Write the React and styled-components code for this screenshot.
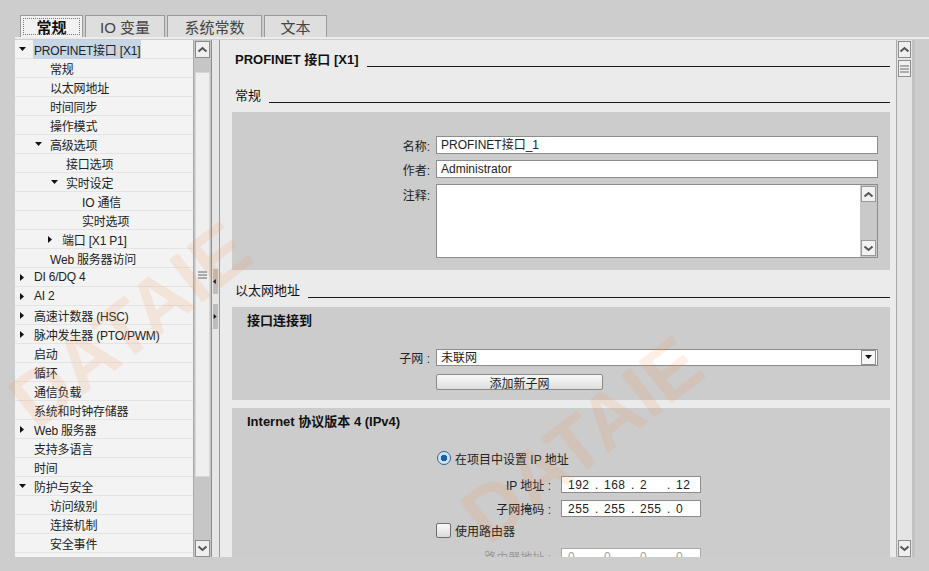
import React from "react";
import styled, { createGlobalStyle } from "styled-components";

const GlobalStyle = createGlobalStyle`
  body {
    margin: 0;
    font-family: "Liberation Sans", "Noto Sans CJK SC", sans-serif;
    font-size: 12px;
    color: #222;
  }
`;

const Root = styled.div`
  position: relative;
  width: 929px;
  height: 571px;
  overflow: hidden;
  background: #cdcdcd;
  padding-top: 15px;
  box-sizing: border-box;
`;

const TabBar = styled.div`
  display: flex;
  gap: 2px;
  height: 22px;
  margin-left: 15px;
  padding-left: 5px;
  border-bottom: 2px solid #ececec;
`;

const Tab = styled.div`
  width: ${({ w }) => w}px;
  height: 22px;
  box-sizing: border-box;
  display: flex;
  align-items: center;
  justify-content: center;
  border: 1px solid #9a9a9a;
  border-bottom: none;
  background: ${({ active }) => (active ? "#f2f2f2" : "#dedede")};
  font-size: 15px;
  font-weight: ${({ active }) => (active ? 700 : 400)};
  color: ${({ active }) => (active ? "#111" : "#444")};
  padding: 2px;
`;

const Focus = styled.span`
  flex: 1;
  align-self: stretch;
  display: flex;
  align-items: center;
  justify-content: center;
  border: 1px dotted #777;
`;

const Body = styled.div`
  display: flex;
  height: 517px;
  margin-left: 15px;
  margin-top: 1px;
`;

const Tree = styled.div`
  width: 178px;
  background: #f3f3f3;
  overflow: hidden;
`;

const TreeRow = styled.div`
  height: 19px;
  box-sizing: border-box;
  border-bottom: 1px solid #e4e4e4;
  display: flex;
  align-items: center;
  padding-left: ${({ level }) => 4 + level * 16}px;
  white-space: nowrap;
  letter-spacing: -0.2px;
`;

const Caret = styled.span`
  width: 14px;
  flex: none;
  display: flex;
  align-items: center;
`;

const TreeLabel = styled.span`
  padding: 1px 1px;
  background: ${({ selected }) => (selected ? "#c6d6e6" : "transparent")};
`;

const VScroll = styled.div`
  width: ${({ w }) => w}px;
  flex: none;
  display: flex;
  flex-direction: column;
  box-sizing: border-box;
  padding: 1px 1px 0;
  background: ${({ bg }) => bg};
  border-left: 1px solid #a8a8a8;
  border-right: ${({ edge }) => (edge ? "3px solid #c2c2c2" : "none")};
`;

const ScrollBtn = styled.div`
  height: 17px;
  flex: none;
  box-sizing: border-box;
  border: 1px solid #8c8c8c;
  background: #efefef;
  display: flex;
  align-items: center;
  justify-content: center;
  margin-top: ${({ mt }) => mt || 0}px;
`;

const Track = styled.div`
  flex: 1;
  display: flex;
  flex-direction: column;
  padding-top: ${({ offset }) => offset || 0}px;
`;

const Thumb = styled.div`
  height: ${({ h }) => h}px;
  background: #efefef;
  border: 1px solid #d6d6d6;
  box-sizing: border-box;
  display: flex;
  align-items: center;
  justify-content: center;
`;

const Splitter = styled.div`
  width: 9px;
  flex: none;
  box-sizing: border-box;
  background: #e6e6e6;
  border-left: 1px solid #8e8e8e;
  border-right: 1px solid #9a9a9a;
  display: flex;
  flex-direction: column;
  align-items: center;
  padding-top: 229px;
  gap: 10px;
`;

const SplitBtn = styled.div`
  width: 5px;
  height: 25px;
  background: #bdbdbd;
  display: flex;
  align-items: center;
  justify-content: center;
`;

const Pane = styled.div`
  width: 676px;
  flex: none;
  background: #ebebeb;
  overflow: hidden;
  box-sizing: border-box;
  padding: 12px 6px 0 12px;
`;

const Heading = styled.div`
  display: flex;
  align-items: flex-end;
  height: 16px;
  margin-top: ${({ mt }) => mt}px;
  padding-left: 3px;
  font-size: 13px;
  font-weight: ${({ big }) => (big ? 700 : 400)};
  color: #111;
  line-height: 16px;
`;

const Rule = styled.div`
  flex: 1;
  border-bottom: 1px solid #1c1c1c;
  margin: 0 0 1px 8px;
`;

const Box = styled.div`
  margin-top: 8px;
  background: #cccccc;
  padding: ${({ pt }) => pt}px 12px ${({ pb }) => pb}px 0;
  display: flex;
  flex-direction: column;
`;

const BoxTitle = styled.div`
  height: 16px;
  line-height: 16px;
  padding-left: 15px;
  font-size: 13px;
  font-weight: 700;
  color: #111;
`;

const Field = styled.div`
  display: grid;
  grid-template-columns: ${({ col }) => col || 198}px ${({ input }) => (input ? `${input}px` : "1fr")};
  column-gap: ${({ gap }) => gap || 6}px;
  align-items: ${({ top }) => (top ? "start" : "center")};
  margin-top: ${({ mt }) => mt || 0}px;
`;

const Label = styled.div`
  text-align: right;
  padding-top: ${({ top }) => (top ? 2 : 0)}px;
  color: ${({ dim }) => (dim ? "#9a9a9a" : "#222")};
`;

const Input = styled.div`
  height: ${({ h }) => h || 18}px;
  box-sizing: border-box;
  background: #fff;
  border: 1px solid ${({ dim }) => (dim ? "#a8a8a8" : "#8c8c8c")};
  display: flex;
  align-items: ${({ multi }) => (multi ? "stretch" : "center")};
  padding-left: ${({ pl }) => pl || 4}px;
  padding-right: ${({ pr }) => pr || 0}px;
  line-height: 14px;
  overflow: hidden;
  color: ${({ dim }) => (dim ? "#a0a0a0" : "#222")};
`;

const InnerScroll = styled.div`
  margin-left: auto;
  width: 17px;
  background: #c9c9c9;
  display: flex;
  flex-direction: column;
  justify-content: space-between;
  padding: 1px;
  box-sizing: border-box;
`;

const SmallBtn = styled.div`
  height: 16px;
  background: #f2f2f2;
  border: 1px solid #999;
  box-sizing: border-box;
  display: flex;
  align-items: center;
  justify-content: center;
`;

const DropBtn = styled.div`
  margin-left: auto;
  width: 15px;
  height: 15px;
  box-sizing: border-box;
  border: 1px solid #8c8c8c;
  background: #f6f6f6;
  display: flex;
  align-items: center;
  justify-content: center;
`;

const Button = styled.div`
  width: 167px;
  height: 16px;
  box-sizing: border-box;
  border: 1px solid #8a8a8a;
  border-radius: 2px;
  background: linear-gradient(#f8f8f8, #dedede);
  display: flex;
  align-items: center;
  justify-content: center;
  font-size: 12px;
`;

const OptionRow = styled.div`
  display: flex;
  align-items: center;
  gap: 4px;
  height: 16px;
  padding-left: ${({ pl }) => pl}px;
  margin-top: ${({ mt }) => mt}px;
  font-size: 12px;
`;

const Radio = styled.span`
  width: 14px;
  height: 14px;
  border-radius: 50%;
  box-sizing: border-box;
  border: 1px solid #2f5f8f;
  background: radial-gradient(circle, #1d5fa0 0 3px, #bfe0f5 3.5px, #e8f4fc 100%);
`;

const Check = styled.span`
  width: 15px;
  height: 15px;
  box-sizing: border-box;
  border: 1px solid #6e6e6e;
  border-radius: 2px;
  background: linear-gradient(#fbfbfb, #dadada);
`;

const Octet = styled.span`
  width: ${({ last }) => (last ? 20 : 27)}px;
  font-size: 12px;
  letter-spacing: 0.5px;
`;

const Dot = styled.span`
  width: 9px;
`;

const Watermark = styled.div`
  position: absolute;
  left: ${({ x }) => x}px;
  top: ${({ y }) => y}px;
  transform: translate(-50%, -50%) rotate(-38deg);
  font-family: "Liberation Sans", sans-serif;
  font-size: 78px;
  font-weight: 700;
  color: rgba(245, 140, 70, 0.14);
  pointer-events: none;
  white-space: nowrap;
`;

const Chevron = ({ down }) => (
  <svg width="11" height="7" viewBox="0 0 11 7">
    <polyline
      points={down ? "1.5,1.5 5.5,5 9.5,1.5" : "1.5,5.5 5.5,2 9.5,5.5"}
      fill="none"
      stroke="#555"
      strokeWidth="2"
    />
  </svg>
);

const Grip = () => (
  <svg width="9" height="8" viewBox="0 0 9 8">
    <path d="M0 1h9M0 4h9M0 7h9" stroke="#666" strokeWidth="1" />
  </svg>
);

const Tri = ({ dir }) => {
  const pts = {
    down: "0,1 7,1 3.5,5",
    right: "1,0 5,3.5 1,7",
    left: "4,0 0,3.5 4,7",
  }[dir];
  return (
    <svg width="7" height="7" viewBox="0 0 7 7">
      <polygon points={pts} fill="#111" />
    </svg>
  );
};

const tree = [
  { t: "PROFINET接口 [X1]", l: 0, c: "down", sel: true },
  { t: "常规", l: 1 },
  { t: "以太网地址", l: 1 },
  { t: "时间同步", l: 1 },
  { t: "操作模式", l: 1 },
  { t: "高级选项", l: 1, c: "down" },
  { t: "接口选项", l: 2 },
  { t: "实时设定", l: 2, c: "down" },
  { t: "IO 通信", l: 3 },
  { t: "实时选项", l: 3 },
  { t: "端口 [X1 P1]", l: 2, c: "right", back: true },
  { t: "Web 服务器访问", l: 1 },
  { t: "DI 6/DQ 4", l: 0, c: "right" },
  { t: "AI 2", l: 0, c: "right" },
  { t: "高速计数器 (HSC)", l: 0, c: "right" },
  { t: "脉冲发生器 (PTO/PWM)", l: 0, c: "right" },
  { t: "启动", l: 0 },
  { t: "循环", l: 0 },
  { t: "通信负载", l: 0 },
  { t: "系统和时钟存储器", l: 0 },
  { t: "Web 服务器", l: 0, c: "right" },
  { t: "支持多语言", l: 0 },
  { t: "时间", l: 0 },
  { t: "防护与安全", l: 0, c: "down" },
  { t: "访问级别", l: 1 },
  { t: "连接机制", l: 1 },
  { t: "安全事件", l: 1 },
];

const IpBox = ({ parts, dim }) => (
  <Input h={17} dim={dim} pl={6}>
    {parts.map((p, i) => (
      <React.Fragment key={i}>
        <Octet last={i === 3}>{p}</Octet>
        {i < 3 && <Dot>.</Dot>}
      </React.Fragment>
    ))}
  </Input>
);

export default function App() {
  return (
    <Root>
      <GlobalStyle />
      <TabBar>
        <Tab w={63} active>
          <Focus>常规</Focus>
        </Tab>
        <Tab w={80}>IO 变量</Tab>
        <Tab w={95}>系统常数</Tab>
        <Tab w={63}>文本</Tab>
      </TabBar>

      <Body>
        <Tree>
          {tree.map((r, i) => (
            <TreeRow key={i} level={r.back ? r.l - 0.25 : r.l}>
              <Caret>{r.c && <Tri dir={r.c} />}</Caret>
              <TreeLabel selected={r.sel}>{r.t}</TreeLabel>
            </TreeRow>
          ))}
        </Tree>

        <VScroll w={18} bg="#c6c6c6">
          <ScrollBtn>
            <Chevron />
          </ScrollBtn>
          <Track offset={14}>
            <Thumb h={405}>
              <Grip />
            </Thumb>
          </Track>
          <ScrollBtn>
            <Chevron down />
          </ScrollBtn>
        </VScroll>

        <Splitter>
          <SplitBtn>
            <Tri dir="left" />
          </SplitBtn>
          <SplitBtn>
            <Tri dir="right" />
          </SplitBtn>
        </Splitter>

        <Pane>
          <Heading big mt={0}>
            PROFINET 接口 [X1]
            <Rule />
          </Heading>
          <Heading mt={20}>
            常规
            <Rule />
          </Heading>
          <Box pt={24} pb={12}>
            <Field>
              <Label>名称:</Label>
              <Input>PROFINET接口_1</Input>
            </Field>
            <Field mt={6}>
              <Label>作者:</Label>
              <Input>Administrator</Input>
            </Field>
            <Field mt={6} top>
              <Label top>注释:</Label>
              <Input h={74} multi>
                <InnerScroll>
                  <SmallBtn>
                    <Chevron />
                  </SmallBtn>
                  <SmallBtn>
                    <Chevron down />
                  </SmallBtn>
                </InnerScroll>
              </Input>
            </Field>
          </Box>

          <Heading mt={13}>
            以太网地址
            <Rule />
          </Heading>
          <Box pt={6} pb={10}>
            <BoxTitle>接口连接到</BoxTitle>
            <Field mt={20}>
              <Label>子网 :</Label>
              <Input h={17} pr={1}>
                未联网
                <DropBtn>
                  <Tri dir="down" />
                </DropBtn>
              </Input>
            </Field>
            <Field mt={8}>
              <span />
              <Button>添加新子网</Button>
            </Field>
          </Box>

          <Box pt={6} pb={40}>
            <BoxTitle>Internet 协议版本 4 (IPv4)</BoxTitle>
            <OptionRow pl={205} mt={20}>
              <Radio />
              在项目中设置 IP 地址
            </OptionRow>
            <Field col={319} input={140} gap={10} mt={10}>
              <Label>IP 地址 :</Label>
              <IpBox parts={["192", "168", "2", "12"]} />
            </Field>
            <Field col={319} input={140} gap={10} mt={7}>
              <Label>子网掩码 :</Label>
              <IpBox parts={["255", "255", "255", "0"]} />
            </Field>
            <OptionRow pl={204} mt={5}>
              <Check />
              使用路由器
            </OptionRow>
            <Field col={319} input={140} gap={10} mt={10}>
              <Label dim>路由器地址 :</Label>
              <IpBox dim parts={["0", "0", "0", "0"]} />
            </Field>
          </Box>
        </Pane>

        <VScroll w={19} bg="#e4e4e4" edge>
          <ScrollBtn>
            <Chevron />
          </ScrollBtn>
          <ScrollBtn mt={2}>
            <Grip />
          </ScrollBtn>
          <Track />
          <ScrollBtn>
            <Chevron down />
          </ScrollBtn>
        </VScroll>
      </Body>

      <Watermark x={130} y={325}>
        DATAIE
      </Watermark>
      <Watermark x={582} y={440}>
        DATAIE
      </Watermark>
    </Root>
  );
}
